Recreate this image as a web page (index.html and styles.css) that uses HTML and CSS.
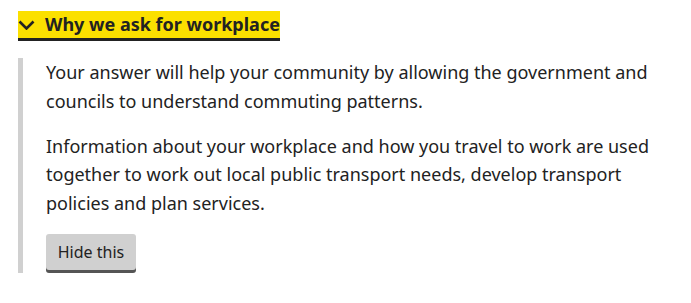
FILE: index.html
```html
<!DOCTYPE html>
<html lang="en">
<head>
  <meta charset="UTF-8">
  <title>Why we ask for workplace</title>
  <link rel="stylesheet" href="styles.css">
</head>
<body>
  <div class="details">
    <div class="details-heading">
      <span class="details-title">
        <svg class="chevron" viewBox="0 0 17 10" width="17" height="10" aria-hidden="true">
          <path d="M1.5 1.5 L8.5 8.5 L15.5 1.5" fill="none" stroke="#222222" stroke-width="2.6"/>
        </svg>
        Why we ask for workplace
      </span>
    </div>
    <div class="details-content">
      <p>Your answer will help your community by allowing the government and councils to understand commuting patterns.</p>
      <p>Information about your workplace and how you travel to work are used together to work out local public transport needs, develop transport policies and plan services.</p>
      <button class="btn-hide">Hide this</button>
    </div>
  </div>
</body>
</html>
```

FILE: styles.css
```css
body {
  font-family: 'Noto Sans', 'Open Sans', sans-serif;
  margin: 0;
  padding: 11px 18px;
  background-color: #fff;
  color: #222222;
}

.details-heading {
  display: flex;
}

.details-title {
  display: inline-flex;
  align-items: center;
  height: 27px;
  background-color: #fbe000;
  box-shadow: 0 3px 0 #222222;
  font-size: 18px;
  font-weight: bold;
  line-height: 27px;
  cursor: pointer;
}

.chevron {
  margin-right: 10px;
}

.details-content {
  margin-top: 20px;
  padding-left: 23px;
  padding-bottom: 3px;
  border-left: 5px solid #d0d0d0;
}

.details-content p {
  margin: 0 0 16px 0;
  font-size: 18px;
  line-height: 1.6;
}

.btn-hide {
  display: block;
  width: 90px;
  height: 36px;
  padding: 0;
  border: none;
  border-radius: 3px;
  background-color: #d0d0d0;
  box-shadow: 0 3px 0 #555555;
  font-family: 'Noto Sans', 'Open Sans', sans-serif;
  font-size: 16px;
  color: #222222;
  cursor: pointer;
}
```
